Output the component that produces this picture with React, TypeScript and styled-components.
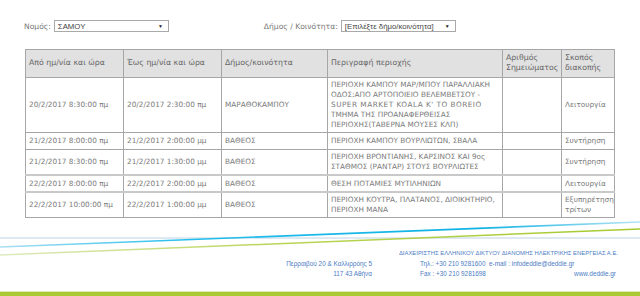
import React from "react";
import styled, { createGlobalStyle } from "styled-components";

const GlobalStyle = createGlobalStyle`
  html, body { margin: 0; padding: 0; background: #ffffff; }
  body { font-family: "DejaVu Sans", "Liberation Sans", sans-serif; }
`;

const Page = styled.div`
  width: 640px;
  height: 296px;
  overflow: hidden;
  display: flex;
  flex-direction: column;
  background: #fff;
`;

const FilterBar = styled.div`
  display: flex;
  align-items: center;
  padding: 20px 0 0 24px;
  height: 12px;
`;

const FilterGroup = styled.div<{ $offset?: number }>`
  display: flex;
  align-items: center;
  margin-left: ${(p) => p.$offset ?? 0}px;
`;

const Label = styled.span`
  font-size: 7.6px;
  color: #7a7a7a;
  margin-right: 3px;
  white-space: nowrap;
`;

const FakeSelect = styled.div`
  box-sizing: border-box;
  width: 115px;
  height: 12px;
  border: 1px solid #a9a9a9;
  display: flex;
  align-items: center;
  justify-content: space-between;
  padding: 0 5px 0 3px;
  font-family: "Liberation Sans", Arial, sans-serif;
  font-size: 7.8px;
  color: #444;
  white-space: nowrap;
`;

const Arrow = styled.span`
  font-size: 5px;
  color: #222;
`;

const Table = styled.table`
  margin: 17px 0 0 25px;
  width: 589px;
  border-collapse: collapse;
  table-layout: fixed;
`;

const Th = styled.th`
  background: #e1e1e1;
  border: 1px solid #a6a6a6;
  font-size: 7.8px;
  line-height: 10px;
  font-weight: normal;
  color: #666;
  text-align: left;
  vertical-align: middle;
  padding: 2px 2px 3px 3px;
  height: 22px;
`;

const Tr = styled.tr<{ $band?: boolean }>`
  height: 17px;
  & > td {
    border-top: ${(p) => (p.$band ? "2px solid #c9c9c9" : "1px solid #a6a6a6")};
    border-bottom: ${(p) => (p.$band ? "2px solid #c9c9c9" : "1px solid #a6a6a6")};
  }
`;

const Td = styled.td`
  border: 1px solid #a6a6a6;
  font-size: 7.3px;
  line-height: 10px;
  color: #7a7a7a;
  padding: 2px 1px 2px 3px;
  vertical-align: middle;
  text-align: left;
`;

const Latin = styled.span`
  letter-spacing: 0.5px;
`;

const Footer = styled.div`
  display: grid;
  margin-top: 1px;
  height: 72px;
  & > * {
    grid-area: 1 / 1;
  }
`;

const Lines = styled.svg`
  display: block;
  width: 640px;
  height: 72px;
`;

const FooterText = styled.div`
  display: flex;
  flex-direction: column;
  align-items: flex-end;
  padding: 29px 0 0 0;
  font-family: "Liberation Sans", Arial, sans-serif;
  color: #4c7cc4;
  font-size: 6.4px;
  line-height: 10.5px;
`;

const Company = styled.div`
  padding-right: 22px;
  font-size: 5.9px;
`;

const Contacts = styled.div`
  display: grid;
  grid-template-columns: auto 196px;
  column-gap: 48px;
  padding-right: 24px;
`;

const Address = styled.div`
  text-align: right;
  white-space: nowrap;
`;

const ContactCol = styled.div`
  display: flex;
  flex-direction: column;
  white-space: nowrap;
`;

const SplitLine = styled.div`
  display: flex;
  justify-content: space-between;
`;

const BottomBar = styled.div`
  height: 4px;
  background: #a9ca35;
  border-top: 1px solid #dfeab8;
  box-shadow: 0 2px 2px #b8b8b8;
`;

type Row = {
  from: string;
  to: string;
  municipality: string;
  desc: React.ReactNode;
  note: string;
  purpose: string;
  band?: boolean;
};

const rows: Row[] = [
  {
    from: "20/2/2017 8:30:00 πμ",
    to: "20/2/2017 2:30:00 πμ",
    municipality: "ΜΑΡΑΘΟΚΑΜΠΟΥ",
    desc: (
      <>
        ΠΕΡΙΟΧΗ ΚΑΜΠΟΥ ΜΑΡ/ΜΠΟΥ ΠΑΡΑΛΛΙΑΚΗ ΟΔΟΣ:ΑΠΟ ΑΡΤΟΠΟΙΕΙΟ ΒΕΛΕΜΒΕΤΣΟΥ -{" "}
        <Latin>SUPER MARKET KOALA K' TO BOREIO</Latin> ΤΜΗΜΑ ΤΗΣ ΠΡΟΑΝΑΦΕΡΘΕΙΣΑΣ
        ΠΕΡΙΟΧΗΣ(ΤΑΒΕΡΝΑ ΜΟΥΣΕΣ ΚΛΠ)
      </>
    ),
    note: "",
    purpose: "Λειτουργία",
  },
  {
    from: "21/2/2017 8:00:00 πμ",
    to: "21/2/2017 2:00:00 μμ",
    municipality: "ΒΑΘΕΟΣ",
    desc: "ΠΕΡΙΟΧΗ ΚΑΜΠΟΥ ΒΟΥΡΛΙΩΤΩΝ, ΣΒΑΛΑ",
    note: "",
    purpose: "Συντήρηση",
  },
  {
    from: "21/2/2017 8:30:00 πμ",
    to: "21/2/2017 1:30:00 μμ",
    municipality: "ΒΑΘΕΟΣ",
    desc: "ΠΕΡΙΟΧΗ ΒΡΟΝΤΙΑΝΗΣ, ΚΑΡΣΙΝΟΣ ΚΑΙ 9ος ΣΤΑΘΜΟΣ (ΡΑΝΤΑΡ) ΣΤΟΥΣ ΒΟΥΡΛΙΩΤΕΣ",
    note: "",
    purpose: "Συντήρηση",
  },
  {
    from: "22/2/2017 8:00:00 πμ",
    to: "22/2/2017 2:00:00 μμ",
    municipality: "ΒΑΘΕΟΣ",
    desc: "ΘΕΣΗ ΠΟΤΑΜΙΕΣ ΜΥΤΙΛΗΝΙΩΝ",
    note: "",
    purpose: "Λειτουργία",
    band: true,
  },
  {
    from: "22/2/2017 10:00:00 πμ",
    to: "22/2/2017 1:00:00 μμ",
    municipality: "ΒΑΘΕΟΣ",
    desc: "ΠΕΡΙΟΧΗ ΚΟΥΤΡΑ, ΠΛΑΤΑΝΟΣ, ΔΙΟΙΚΗΤΗΡΙΟ, ΠΕΡΙΟΧΗ ΜΑΝΑ",
    note: "",
    purpose: "Εξυπηρέτηση τρίτων",
  },
];

const colWidths = [98, 98, 106, 175, 59, 53];

export default function App() {
  return (
    <>
      <GlobalStyle />
      <Page>
        <FilterBar>
          <FilterGroup>
            <Label>Νομός:</Label>
            <FakeSelect>
              <span>ΣΑΜΟΥ</span>
              <Arrow>▼</Arrow>
            </FakeSelect>
          </FilterGroup>
          <FilterGroup $offset={95}>
            <Label>Δήμος / Κοινότητα:</Label>
            <FakeSelect>
              <span>[Επιλέξτε δήμο/κοινότητα]</span>
              <Arrow>▼</Arrow>
            </FakeSelect>
          </FilterGroup>
        </FilterBar>

        <Table>
          <colgroup>
            {colWidths.map((w, i) => (
              <col key={i} style={{ width: w }} />
            ))}
          </colgroup>
          <thead>
            <tr>
              <Th>Από ημ/νία και ώρα</Th>
              <Th>Έως ημ/νία και ώρα</Th>
              <Th>Δήμος/κοινότητα</Th>
              <Th>Περιγραφή περιοχής</Th>
              <Th>Αριθμός Σημειώματος</Th>
              <Th>Σκοπός διακοπής</Th>
            </tr>
          </thead>
          <tbody>
            {rows.map((r, i) => (
              <Tr key={i} $band={r.band}>
                <Td>{r.from}</Td>
                <Td>{r.to}</Td>
                <Td>{r.municipality}</Td>
                <Td>{r.desc}</Td>
                <Td>{r.note}</Td>
                <Td>{r.purpose}</Td>
              </Tr>
            ))}
          </tbody>
        </Table>

        <Footer>
          <Lines viewBox="0 0 640 72" preserveAspectRatio="none">
            <defs>
              <linearGradient id="blueG" x1="0" y1="0" x2="1" y2="0">
                <stop offset="0" stopColor="#5b9ad0" />
                <stop offset="0.5" stopColor="#2f86cc" />
                <stop offset="1" stopColor="#1f78c4" />
              </linearGradient>
              <linearGradient id="cyanG" x1="0" y1="0" x2="1" y2="0">
                <stop offset="0" stopColor="#a9dff2" />
                <stop offset="0.3" stopColor="#22bdec" />
                <stop offset="0.75" stopColor="#10b2e4" />
                <stop offset="1" stopColor="#b5e4f4" />
              </linearGradient>
              <linearGradient id="greenG" x1="0" y1="0" x2="1" y2="0">
                <stop offset="0" stopColor="#dfeabf" />
                <stop offset="0.45" stopColor="#b9d454" />
                <stop offset="1" stopColor="#a6c92e" />
              </linearGradient>
            </defs>
            <line x1="0" y1="19" x2="640" y2="19" stroke="#bcd2e4" strokeWidth="1" />
            <line x1="0" y1="20.5" x2="640" y2="20.5" stroke="url(#blueG)" strokeWidth="1.4" />
            <line x1="0" y1="28" x2="640" y2="3" stroke="url(#cyanG)" strokeWidth="1.6" />
            <line x1="0" y1="36" x2="640" y2="10" stroke="url(#greenG)" strokeWidth="1.5" />
          </Lines>
          <FooterText>
            <Company>ΔΙΑΧΕΙΡΙΣΤΗΣ ΕΛΛΗΝΙΚΟΥ ΔΙΚΤΥΟΥ ΔΙΑΝΟΜΗΣ ΗΛΕΚΤΡΙΚΗΣ ΕΝΕΡΓΕΙΑΣ Α.Ε.</Company>
            <Contacts>
              <Address>
                <div>Περραιβού 20 &amp; Καλλιρρόης 5</div>
                <div>117 43 Αθήνα</div>
              </Address>
              <ContactCol>
                <div>Τηλ.: +30 210 9281600&nbsp; e-mail : infodeddie@deddie.gr</div>
                <SplitLine>
                  <span>Fax : +30 210 9281698</span>
                  <span>www.deddie.gr</span>
                </SplitLine>
              </ContactCol>
            </Contacts>
          </FooterText>
        </Footer>
        <BottomBar />
      </Page>
    </>
  );
}
